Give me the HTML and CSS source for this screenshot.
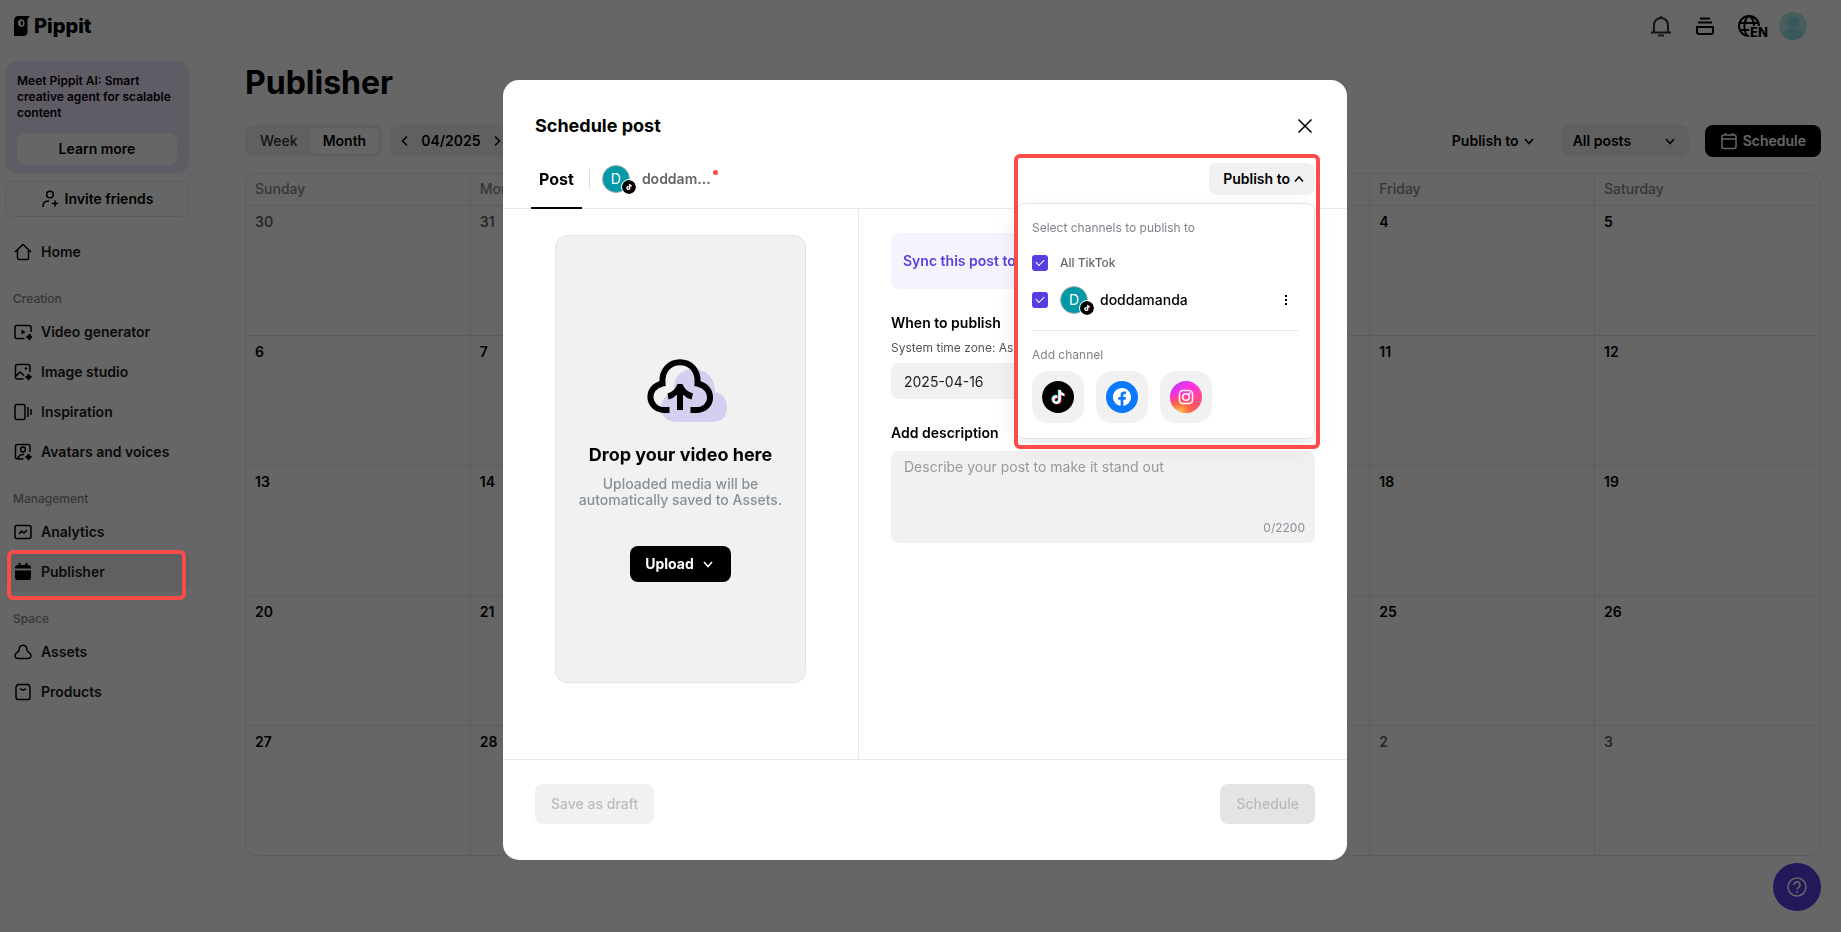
FILE: index.html
```html
<!DOCTYPE html>
<html lang="en">
<head>
  <meta charset="UTF-8" />
  <meta name="viewport" content="width=device-width, initial-scale=1.0"/>
  <title>Pippit - Publisher</title>
  <link rel="stylesheet" href="styles.css">
</head>
<body>
  <!-- Shared icons -->
  <svg class="sprite" aria-hidden="true">
    <symbol id="note" viewBox="0 0 24 24"><path d="M12.525.02c1.31-.02 2.61-.01 3.91-.02.08 1.53.63 3.09 1.75 4.17 1.12 1.11 2.7 1.62 4.24 1.79v4.03c-1.44-.05-2.89-.35-4.2-.97-.57-.26-1.1-.59-1.62-.93-.01 2.92.01 5.84-.02 8.75-.08 1.4-.54 2.79-1.35 3.94-1.31 1.92-3.58 3.17-5.91 3.21-1.43.08-2.86-.31-4.08-1.03-2.02-1.19-3.44-3.37-3.65-5.71-.02-.5-.03-1-.01-1.49.18-1.9 1.12-3.72 2.58-4.96 1.66-1.44 3.98-2.13 6.15-1.72.02 1.48-.04 2.96-.04 4.44-.99-.32-2.15-.23-3.02.37-.63.41-1.11 1.04-1.36 1.75-.21.51-.15 1.07-.14 1.61.24 1.64 1.82 3.02 3.5 2.87 1.12-.01 2.19-.66 2.77-1.61.19-.33.4-.67.41-1.06.1-1.79.06-3.57.07-5.36.01-4.03-.01-8.05.02-12.07z"/></symbol>
    <symbol id="tiktok" viewBox="0 0 32 32">
      <circle cx="16" cy="16" r="16" fill="#000"/>
      <use href="#note" x="8.500" y="8.400" width="14" height="14" fill="#25f4ee"/>
      <use href="#note" x="9.900" y="9.600" width="14" height="14" fill="#fe2c55"/>
      <use href="#note" x="9.200" y="9" width="14" height="14" fill="#fff"/>
    </symbol>
    <symbol id="down" viewBox="0 0 16 16"><path d="M4 6l4 4.500 4-4.500" fill="none" stroke="currentColor" stroke-width="1.500"/></symbol>
    <symbol id="star" viewBox="0 0 8 8"><path d="M4 0.500Q4.500 3.500 7.500 4Q4.500 4.500 4 7.500Q3.500 4.500 0.500 4Q3.500 3.500 4 0.500Z" fill="currentColor" stroke="currentColor"/></symbol>
  </svg>

  <header class="topbar">
    <a class="logo" href="#">
      <svg width="16" height="20" viewBox="0 0 16 20"><path d="M4.500 0H16L13.500 3V15.500Q13.500 20 9 20H0V5Q0 0 4.500 0Z"/><ellipse cx="7.300" cy="7" rx="3.300" ry="3.800" fill="#fff"/><ellipse cx="7.800" cy="7" rx="1.300" ry="2.300"/></svg>
      <span>Pippit</span>
    </a>
    <div class="top-icons">
      <button type="button" aria-label="Notifications"><svg width="24" height="24" viewBox="0 0 24 24" class="line dark"><path d="M5 18V11a7 7 0 0 1 14 0V18M2 18.500H22M9 21.500h6M12 4V2"/></svg></button>
      <button type="button" aria-label="Tasks"><svg width="24" height="24" viewBox="0 0 24 24" class="line"><path d="M7 4.500h10M5 8.500h14"/><path d="M4 13H20V18q0 2-2 2H6q-2 0-2-2Z"/></svg></button>
      <button type="button" class="lang" aria-label="Language"><svg width="24" height="24" viewBox="0 0 24 24" class="line"><path d="M22 12A10 10 0 1 0 12 22M22 12A10 10 0 0 0 12 2M2.500 9H21.500M2.500 16H12M12 2C6 6 6 18 11 22M12 2C15.500 4 17 8 17 12"/></svg><span>EN</span></button>
      <button type="button" aria-label="Account"><svg width="28" height="28" viewBox="0 0 28 28"><circle cx="14" cy="14" r="14" fill="#b8e8ec"/><rect x="9" y="5" width="11" height="10" rx="3" fill="#8fdce4"/><path d="M3 22Q7 16 14 16T25 22Q21 28 14 28T3 22Z" fill="#8fdce4"/></svg></button>
    </div>
  </header>

  <div class="layout">
    <!-- Sidebar -->
    <aside class="sidebar">
      <div class="promo">
        <p>Meet Pippit AI: Smart creative agent for scalable content</p>
        <button type="button">Learn more</button>
      </div>
      <button type="button" class="invite">
        <svg width="18" height="18" viewBox="0 0 18 18" class="line"><circle cx="9" cy="4.500" r="3.300"/><path d="M2 17v-1q0-5 6-5M14 10.500v6M11 13.500h6"/></svg>
        Invite friends
      </button>
      <nav>
        <a href="#"><svg width="18" height="18" viewBox="0 0 18 18" class="line"><path d="M1 9L9 1.500 17 9M3.500 7.500V15q0 1.500 1.500 1.500h8q1.500 0 1.500-1.500V7.500"/></svg>Home</a>
        <h2>Creation</h2>
        <a href="#"><svg width="18" height="18" viewBox="0 0 18 18" class="line"><path d="M10.500 15.500H3q-2 0-2-2V4.500q0-2 2-2H15q2 0 2 2V9"/><path d="M7.500 6.500v5l4-2.500z" fill="currentColor" stroke="none"/><use href="#star" x="12" y="10.500" width="7" height="7"/></svg>Video generator</a>
        <a href="#"><svg width="18" height="18" viewBox="0 0 18 18" class="line"><path d="M9.500 16H3.500q-2 0-2-2V3.500q0-2 2-2H14q2 0 2 2V9M2 13L6 9 10 12.500"/><circle cx="12" cy="5.500" r="1.200" fill="currentColor" stroke="none"/><use href="#star" x="11" y="10.500" width="7" height="7"/></svg>Image studio</a>
        <a href="#"><svg width="18" height="18" viewBox="0 0 18 18" class="line"><rect x="1" y="1.500" width="10" height="15" rx="2"/><path d="M14 4v10M17 6v6"/></svg>Inspiration</a>
        <a href="#"><svg width="18" height="18" viewBox="0 0 18 18" class="line"><path d="M9.500 16H3.500q-2 0-2-2V3.500q0-2 2-2H14q2 0 2 2V9M4 15.500Q5 11 10 11.500"/><circle cx="9" cy="6.500" r="2.400"/><use href="#star" x="11" y="10.500" width="7" height="7"/></svg>Avatars and voices</a>
        <h2>Management</h2>
        <a href="#"><svg width="18" height="18" viewBox="0 0 18 18" class="line"><rect x="1" y="2.500" width="16" height="13" rx="2"/><path d="M5 11L7.500 8 10 10 13 7"/></svg>Analytics</a>
        <a href="#" class="active"><svg width="18" height="18" viewBox="0 0 18 18"><path d="M4.500 0H6.500V2H11.500V0H13.500V2Q17 2 17 4.500V5.500H1V4.500Q1 2 4.500 2ZM1 7.500H17V14.500Q17 17 14.500 17H3.500Q1 17 1 14.500Z"/></svg>Publisher</a>
        <h2>Space</h2>
        <a href="#"><svg width="18" height="18" viewBox="0 0 18 18" class="line"><path d="M5 7.500C5 0.500 13 0.500 13 7.500C14 9.500 17 9.500 17 12.500Q17 15.500 13.500 15.500H4.500Q1 15.500 1 12.500C1 9.500 4.500 9.500 5 7.500Z"/></svg>Assets</a>
        <a href="#"><svg width="18" height="18" viewBox="0 0 18 18" class="line"><path d="M3.500 1.500H14.500L16 4V14.500q0 2-2 2H4q-2 0-2-2V4ZM6 5.500q3 3 6 0"/></svg>Products</a>
      </nav>
    </aside>

    <!-- Calendar page -->
    <main>
      <h1>Publisher</h1>
      <div class="toolbar">
        <div class="switch">
          <button type="button">Week</button>
          <button type="button" class="on">Month</button>
        </div>
        <div class="month">
          <button type="button" aria-label="Previous month"><svg width="12" height="12" viewBox="0 0 12 12" class="line"><path d="M8 1.500L3.500 6 8 10.500"/></svg></button>
          <span>04/2025</span>
          <button type="button" aria-label="Next month"><svg width="12" height="12" viewBox="0 0 12 12" class="line"><path d="M4 1.500L8.500 6 4 10.500"/></svg></button>
        </div>
        <button type="button" class="plain">Publish to <svg width="16" height="16"><use href="#down"/></svg></button>
        <div class="filter">
          <select aria-label="Filter posts"><option>All posts</option></select>
          <svg width="16" height="16"><use href="#down"/></svg>
        </div>
        <button type="button" class="primary">
          <svg width="18" height="18" viewBox="0 0 18 18" class="line"><rect x="2" y="3" width="14" height="13.500" rx="2"/><path d="M2 7H16M5.500 1V3M12.500 1V3"/></svg>
          Schedule
        </button>
      </div>
      <table class="calendar">
        <thead>
          <tr><th>Sunday</th><th>Monday</th><th>Tuesday</th><th>Wednesday</th><th>Thursday</th><th>Friday</th><th>Saturday</th></tr>
        </thead>
        <tbody>
          <tr><td class="out">30</td><td class="out">31</td><td>1</td><td>2</td><td>3</td><td>4</td><td>5</td></tr>
          <tr><td>6</td><td>7</td><td>8</td><td>9</td><td>10</td><td>11</td><td>12</td></tr>
          <tr><td>13</td><td>14</td><td>15</td><td>16</td><td>17</td><td>18</td><td>19</td></tr>
          <tr><td>20</td><td>21</td><td>22</td><td>23</td><td>24</td><td>25</td><td>26</td></tr>
          <tr><td>27</td><td>28</td><td>29</td><td>30</td><td class="out">1</td><td class="out">2</td><td class="out">3</td></tr>
        </tbody>
      </table>
    </main>
  </div>

  <button type="button" class="help" aria-label="Help">
    <svg width="20" height="20" viewBox="0 0 20 20" class="line"><circle cx="10" cy="10" r="9"/><path d="M7 8a3 3 0 1 1 4.500 2.500Q10 11.300 10 12.500M10 14v2"/></svg>
  </button>

  <!-- Schedule modal -->
  <div class="overlay">
    <div class="modal" role="dialog" aria-labelledby="modalTitle">
      <div class="modal-head">
        <h2 id="modalTitle">Schedule post</h2>
        <button type="button" aria-label="Close"><svg width="16" height="16" viewBox="0 0 16 16" class="line"><path d="M1.500 1.500l13 13M14.500 1.500l-13 13"/></svg></button>
      </div>

      <div class="tabs">
        <button type="button" class="tab on">Post</button>
        <button type="button" class="tab account">
          <span class="avatar">D<svg width="16" height="16"><use href="#tiktok"/></svg></span>
          doddam...
          <i class="dot"></i>
        </button>

        <div class="publish-menu">
          <button type="button" class="menu-btn">Publish to <svg width="12" height="12" viewBox="0 0 12 12" class="line"><path d="M2 8.500L6 4 10 8.500"/></svg></button>
          <div class="popover">
            <p>Select channels to publish to</p>
            <label class="check small"><input type="checkbox" checked>All TikTok</label>
            <div class="channel">
              <label class="check"><input type="checkbox" checked>
                <span class="avatar">D<svg width="16" height="16"><use href="#tiktok"/></svg></span>
                doddamanda
              </label>
              <button type="button" aria-label="More"><svg width="4" height="12" viewBox="0 0 4 12"><path d="M1 1h2v2H1zM1 5h2v2H1zM1 9h2v2H1z"/></svg></button>
            </div>
            <hr>
            <p>Add channel</p>
            <div class="networks">
              <button type="button" aria-label="TikTok"><svg width="32" height="32"><use href="#tiktok"/></svg></button>
              <button type="button" aria-label="Facebook"><svg width="32" height="32" viewBox="0 0 32 32"><circle cx="16" cy="16" r="16" fill="#0a78ff"/><path transform="translate(7 7) scale(.75)" fill="#fff" d="M24 12.073c0-6.627-5.373-12-12-12s-12 5.373-12 12c0 5.990 4.388 10.954 10.125 11.854v-8.385H7.078v-3.470h3.047V9.430c0-3.007 1.792-4.669 4.533-4.669 1.312 0 2.686.235 2.686.235v2.953H15.830c-1.491 0-1.956.925-1.956 1.874v2.250h3.328l-.532 3.470h-2.796v8.385C19.612 23.027 24 18.062 24 12.073z"/></svg></button>
              <button type="button" aria-label="Instagram"><svg width="32" height="32" viewBox="0 0 32 32">
                <defs>
                  <linearGradient id="pink" x1="0" y1="0" x2=".7" y2="1"><stop offset="0" stop-color="#a33cf5"/><stop offset=".4" stop-color="#ff30e6"/><stop offset="1" stop-color="#ff5a5a"/></linearGradient>
                  <radialGradient id="gold" cx=".3" cy="1" r=".65"><stop offset="0" stop-color="#ffd34d"/><stop offset=".5" stop-color="#ff6a3c" stop-opacity=".9"/><stop offset="1" stop-color="#ff4a5a" stop-opacity="0"/></radialGradient>
                </defs>
                <circle cx="16" cy="16" r="16" fill="url(#pink)"/><circle cx="16" cy="16" r="16" fill="url(#gold)"/>
                <g fill="none" stroke="#fff" stroke-width="1.500"><rect x="9.500" y="9.500" width="13" height="13" rx="3.500"/><circle cx="16" cy="16" r="3.300"/></g><circle cx="19.700" cy="12.300" r="1" fill="#fff"/>
              </svg></button>
            </div>
          </div>
          <div class="highlight"></div>
        </div>
      </div>

      <div class="modal-body">
        <div class="media">
          <div class="dropzone">
            <svg width="92" height="64" viewBox="-12 0 92 64">
              <path d="M27 30C25 4 68 2 68 33C76 34 80 41 80 48Q80 63 65 63H29Q14 62 14 48Q15 36 27 33Z" fill="#d5ceef"/>
              <path d="M22.500 51H18C0 51 -2 28 15.500 24.500C13-4 53-4 50.500 24.500C68 28 67 51 49 51H43.500" fill="none" stroke="#000" stroke-width="6"/>
              <path d="M30.500 25H35.500Q38 32 46 34.500L44.500 40.500Q39 39 36 35.500V51H30V35.500Q27 39 21.500 40.500L20.500 34.500Q28 32 30.500 25Z"/>
            </svg>
            <h3>Drop your video here</h3>
            <p>Uploaded media will be automatically saved to Assets.</p>
            <button type="button">Upload <svg width="16" height="16"><use href="#down"/></svg></button>
          </div>
        </div>
        <form class="fields">
          <div class="sync">Sync this post to</div>
          <label class="title" for="publishDate">When to publish</label>
          <p class="zone">System time zone: Asia</p>
          <input type="text" id="publishDate" value="2025-04-16">
          <label class="title" for="description">Add description</label>
          <div class="description">
            <textarea id="description" placeholder="Describe your post to make it stand out"></textarea>
            <span>0/2200</span>
          </div>
        </form>
      </div>

      <div class="modal-foot">
        <button type="button" class="draft" disabled>Save as draft</button>
        <button type="button" class="submit" disabled>Schedule</button>
      </div>
    </div>
  </div>
</body>
</html>
```
FILE: styles.css
```css
:root {
  --purple: #5b3ee0;
  --red: #fa4c48;
  --soft: #f1f1f1;
  --border: #e8e8e8;
}

*, *::before, *::after {
  box-sizing: border-box;
}

body {
  margin: 0;
  min-height: 100vh;
  font-family: Inter, "Liberation Sans", sans-serif;
  font-size: 14px;
  font-weight: 600;
  line-height: 20px;
  color: #000;
  background-color: #fff;
}

h1, h2, h3, p {
  margin: 0;
}

button, input, select, textarea {
  font: inherit;
  color: inherit;
  border: none;
  margin: 0;
  padding: 0;
  background: none;
}

button {
  display: flex;
  align-items: center;
  justify-content: center;
  white-space: nowrap;
  cursor: pointer;
}

a {
  color: inherit;
  text-decoration: none;
}

svg {
  flex: none;
}

.sprite {
  position: absolute;
  width: 0;
  height: 0;
}

.line {
  fill: none;
  stroke: currentColor;
  stroke-width: 1.5;
}

/* Top bar */
.topbar {
  display: flex;
  align-items: center;
  justify-content: space-between;
  height: 51px;
  padding: 0 34px 0 14px;
}

.logo {
  display: flex;
  align-items: center;
  gap: 4px;
  font-size: 20px;
  font-weight: 800;
}

.top-icons {
  display: flex;
  align-items: center;
  gap: 20px;
}

.top-icons .line {
  stroke-width: 2;
}

.top-icons .dark {
  color: #333;
}

.lang {
  position: relative;
  margin-right: -2px;
}

.lang span {
  position: absolute;
  right: -7px;
  bottom: 0;
  padding-left: 1px;
  font-size: 13px;
  font-weight: 800;
  line-height: 12px;
  background-color: #fff;
}

.layout {
  display: flex;
}

/* Sidebar */
.sidebar {
  flex: none;
  width: 184px;
  margin: 10px 56px 0 5px;
}

.promo {
  padding: 12px;
  padding-bottom: 8px;
  border-radius: 12px;
  background-color: #f0e6ff;
}

.promo p {
  margin-bottom: 12px;
  font-size: 12px;
  line-height: 16px;
}

.promo button {
  width: 100%;
  height: 32px;
  border-radius: 8px;
  background-color: #fff;
}

.invite {
  gap: 6px;
  width: 100%;
  height: 36px;
  margin: 8px 0 15px;
  border: 1px solid var(--border);
  border-radius: 8px;
}

.sidebar nav a {
  display: flex;
  align-items: center;
  gap: 9px;
  height: 40px;
  padding-left: 9px;
  border-radius: 8px;
  color: #1b1b22;
}

.sidebar nav svg {
  color: #000;
}

.sidebar nav h2 {
  height: 40px;
  padding: 18px 0 0 8px;
  font-size: 12px;
  font-weight: 500;
  line-height: 18px;
  color: #888;
}

.sidebar nav .active {
  position: relative;
  background-color: var(--soft);
}

.highlight,
.sidebar nav .active::after {
  position: absolute;
  border: 4px solid var(--red);
  border-radius: 6px;
  pointer-events: none;
}

.sidebar nav .active::after {
  content: "";
  z-index: 20;
  top: -2px;
  left: 2px;
  right: 3px;
  height: 50px;
}

/* Calendar page */
main {
  flex: 1;
  padding: 12px 20px 0 0;
}

h1 {
  font-size: 32px;
  line-height: 40px;
}

.toolbar {
  display: flex;
  align-items: center;
  gap: 8px;
  margin: 22px 0 16px;
}

.switch, .month {
  display: flex;
  align-items: center;
  height: 32px;
  padding: 3px;
  border-radius: 8px;
  background-color: var(--soft);
}

.switch button {
  height: 26px;
  padding: 0 12px;
  border-radius: 6px;
  font-weight: 500;
  color: #333;
}

.switch .on {
  padding: 0 13px;
  font-weight: 600;
  color: #000;
  background-color: #fff;
}

.month {
  gap: 10px;
  padding: 0 9px;
}

.plain {
  gap: 2px;
  margin-left: auto;
}

.filter {
  position: relative;
  width: 128px;
  margin: 0 8px 0 16px;
}

.filter select {
  appearance: none;
  width: 100%;
  height: 32px;
  padding: 0 12px;
  border-radius: 8px;
  background-color: var(--soft);
}

.filter svg {
  position: absolute;
  top: 8px;
  right: 11px;
}

.primary {
  gap: 5px;
  height: 32px;
  padding: 0 15px;
  border-radius: 8px;
  color: #fff;
  background-color: #000;
}

.calendar {
  width: 100%;
  table-layout: fixed;
  border: 1px solid var(--border);
  border-radius: 12px;
  border-spacing: 0;
}

.calendar th, .calendar td {
  padding: 6px 9px;
  text-align: left;
  vertical-align: top;
  border-right: 1px solid var(--border);
}

.calendar th {
  height: 31px;
  padding: 5px 9px;
  font-weight: 500;
  color: #888;
}

.calendar td {
  height: 130px;
  border-top: 1px solid var(--border);
}

.calendar .out {
  color: #666;
}

.calendar th:last-child, .calendar td:last-child {
  border-right: none;
}

.help {
  position: fixed;
  right: 20px;
  bottom: 21px;
  width: 48px;
  height: 48px;
  border-radius: 50%;
  color: #fff;
  background-color: var(--purple);
}

/* Modal */
.overlay {
  position: fixed;
  inset: 0;
  z-index: 10;
  display: flex;
  align-items: center;
  justify-content: center;
  padding: 8px 0 0 9px;
  background-color: rgba(0, 0, 0, 0.6);
}

.modal {
  width: 844px;
  max-width: 100%;
  border-radius: 16px;
  background-color: #fff;
}

.modal-head {
  display: flex;
  align-items: center;
  justify-content: space-between;
  padding: 34px 34px 22px 32px;
}

.modal-head h2 {
  font-size: 18px;
  line-height: 24px;
}

.tabs {
  display: flex;
  height: 49px;
  padding: 0 32px 0 28px;
  border-bottom: 1px solid var(--border);
}

.tab {
  height: 49px;
  padding-bottom: 11px;
}

.tab.on {
  padding: 0 8px 9px;
  font-size: 16px;
  font-weight: 700;
  border-bottom: 2px solid #000;
}

.account {
  gap: 12px;
  color: #666;
}

.account::before {
  content: "";
  width: 1px;
  height: 20px;
  margin-left: 7px;
  background-color: #ddd;
}

.avatar {
  position: relative;
  display: flex;
  align-items: center;
  justify-content: center;
  width: 28px;
  height: 28px;
  border: 1px solid #aaa;
  border-radius: 50%;
  font-weight: 400;
  color: #fff;
  background-color: #0199a7;
}

.avatar svg {
  position: absolute;
  right: -8px;
  bottom: -3px;
  border: 1px solid #fff;
  border-radius: 50%;
}

.dot {
  width: 5px;
  height: 5px;
  margin: 0 0 14px -10px;
  border-radius: 50%;
  background-color: var(--red);
}

.publish-menu {
  position: relative;
  margin: 3px 0 0 auto;
}

.menu-btn {
  gap: 3px;
  height: 32px;
  padding: 0 10px 0 14px;
  border-radius: 8px;
  background-color: var(--soft);
}

.popover {
  position: absolute;
  z-index: 1;
  top: 40px;
  right: 0;
  width: 299px;
  padding: 15px;
  border: 1px solid #e4e4e4;
  border-radius: 8px;
  font-weight: 500;
  background-color: #fff;
  box-shadow: 0 8px 24px rgba(0, 0, 0, 0.08);
}

.popover p {
  font-size: 12px;
  font-weight: 400;
  line-height: 18px;
  color: #80838a;
}

.check {
  display: flex;
  align-items: center;
  gap: 12px;
}

.check.small {
  margin: 17px 0 10px;
  font-size: 12px;
  line-height: 18px;
  color: #666;
}

.check input {
  appearance: none;
  width: 16px;
  height: 16px;
  border-radius: 3px;
  background-color: var(--purple);
}

.check input:checked::after {
  content: "";
  display: block;
  width: 8px;
  height: 5px;
  margin: 4px;
  border: solid #fff;
  border-width: 0 0 1px 1px;
  transform: rotate(-45deg);
}

.channel {
  display: flex;
  align-items: center;
  justify-content: space-between;
  height: 36px;
  padding-right: 11px;
}

.popover hr {
  margin: 12px 1px 15px 0;
  border: none;
  border-top: 1px solid var(--border);
}

.networks {
  display: flex;
  gap: 12px;
  margin-top: 7px;
}

.networks button {
  width: 52px;
  height: 52px;
  border-radius: 16px;
  background-color: var(--soft);
}

.highlight {
  z-index: 2;
  top: -9px;
  right: -5px;
  width: 306px;
  height: 295px;
}

.modal-body {
  display: flex;
  height: 550px;
}

.media {
  flex: none;
  width: 356px;
  padding: 26px 52px;
  border-right: 1px solid var(--border);
}

.dropzone {
  display: flex;
  flex-direction: column;
  align-items: center;
  height: 448px;
  padding: 123px 20px 0;
  border: 1px solid #e4e4e4;
  border-radius: 12px;
  text-align: center;
  background-color: var(--soft);
}

.dropzone h3 {
  margin: 20px 0 9px;
  font-size: 18px;
  line-height: 24px;
  white-space: nowrap;
}

.dropzone p {
  font-weight: 500;
  line-height: 16px;
  color: #87919a;
}

.dropzone button {
  gap: 6px;
  height: 36px;
  margin-top: 38px;
  padding: 0 15px;
  border-radius: 8px;
  font-weight: 700;
  color: #fff;
  background-color: #000;
}

.fields {
  flex: 1;
  padding: 24px 32px;
}

.sync {
  height: 56px;
  margin-bottom: 24px;
  padding: 18px 12px;
  border-radius: 8px;
  color: var(--purple);
  background-color: #f6f3ff;
}

.fields .title {
  display: block;
}

.zone {
  margin: 6px 0;
  font-size: 12px;
  font-weight: 400;
  line-height: 18px;
  color: #555;
}

.fields input {
  width: 100%;
  height: 36px;
  margin-bottom: 24px;
  padding: 0 13px;
  border-radius: 8px;
  font-weight: 400;
  color: #222;
  background-color: var(--soft);
}

.description {
  display: flex;
  flex-direction: column;
  height: 92px;
  margin-top: 8px;
  padding: 6px 10px 6px 13px;
  border-radius: 8px;
  font-weight: 400;
  background-color: var(--soft);
}

.description textarea {
  flex: 1;
  resize: none;
  outline: none;
}

.description textarea::placeholder {
  color: #999;
}

.description span {
  font-size: 12px;
  line-height: 18px;
  text-align: right;
  color: #87919a;
}

.modal-foot {
  display: flex;
  justify-content: space-between;
  padding: 24px 32px 36px;
  border-top: 1px solid var(--border);
}

.modal-foot button {
  height: 40px;
  padding: 0 16px;
  border-radius: 8px;
  font-weight: 500;
  color: #bbb;
  background-color: var(--soft);
}

.modal-foot .submit {
  background-color: #e4e4e4;
}
```
